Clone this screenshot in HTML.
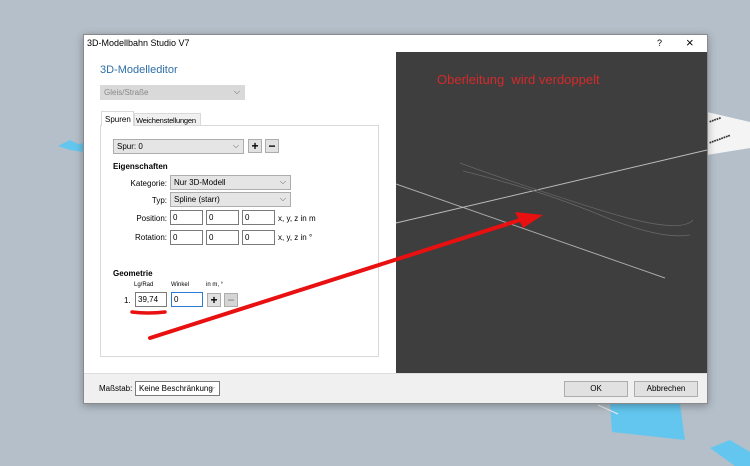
<!DOCTYPE html>
<html><head><style>
*{margin:0;padding:0;box-sizing:border-box}
body{width:750px;height:466px;background:#b5bfc9;position:relative;overflow:hidden;font-family:"Liberation Sans",sans-serif;font-size:8px;color:#000}
.a{position:absolute}
.inp{position:absolute;background:#fff;border:1px solid #7a7a7a;height:15px;font-size:8px;padding:2px 2px;line-height:10px}
.sel{position:absolute;background:#e5e5e5;border:1px solid #adadad;height:15px;font-size:8px;padding:2px 3px;line-height:10px}
.sel:after{content:"⌵";position:absolute;right:4px;top:1px;color:#555;font-size:8px}
.btn{position:absolute;background:#e1e1e1;border:1px solid #adadad;width:14px;height:14px;text-align:center;font-weight:bold;font-size:12px;line-height:12px}
.lbl{position:absolute;font-size:8px;text-align:right}
</style></head><body>
<svg class="a" style="left:0;top:0" width="750" height="466">
<path d="M58 146 L70 140 L78 144 L84 143 L84 152 L70 150 Z" fill="#63c6ee"/>
<polygon points="610,403 680,404 685,440 612,432" fill="#63c6ee"/>
<polygon points="710,448 730,440 750,452 750,466 735,466" fill="#63c6ee"/>
<polygon points="707,112 750,122 750,148 707,155" fill="#f4f4f4"/>
<line x1="598" y1="405" x2="618" y2="414" stroke="#eee" stroke-width="1"/>
<text x="710" y="124" font-size="7" fill="#333" transform="rotate(-20 710 124)">▪▪▪▪▪</text>
<text x="710" y="145" font-size="7" fill="#333" transform="rotate(-20 710 145)">▪▪▪▪▪▪▪▪▪</text>
</svg>
<div class="a" style="left:83px;top:34px;width:625px;height:370px;background:#fff;border:1px solid #8a8a8a;box-shadow:0 2px 8px rgba(0,0,0,.3)"></div>
<div class="a" style="left:87px;top:38px;font-size:9px">3D-Modellbahn Studio V7</div>
<div class="a" style="left:657px;top:38px;font-size:9px">?</div>
<div class="a" style="left:686px;top:35px;font-size:13px">×</div>
<div class="a" style="left:100px;top:64px;font-size:11px;color:#2e6ea6">3D-Modelleditor</div>
<div class="sel" style="left:100px;top:85px;width:145px;background:#d9d9d9;border-color:#d9d9d9;color:#888">Gleis/Straße</div>
<div class="a" style="left:100px;top:125px;width:279px;height:232px;border:1px solid #d9d9d9"></div>
<div class="a" style="left:101px;top:111px;width:33px;height:15px;border:1px solid #d9d9d9;border-bottom:none;background:#fff;padding:3px 3px;font-size:8px;line-height:9px">Spuren</div>
<div class="a" style="left:134px;top:113px;width:67px;height:13px;border:1px solid #d9d9d9;background:#f0f0f0;padding:2px 1px;font-size:7.5px;letter-spacing:-0.2px;line-height:9px;white-space:nowrap;overflow:hidden">Weichenstellungen</div>
<div class="sel" style="left:113px;top:139px;width:131px">Spur: 0</div>
<div class="btn" style="left:248px;top:139px">+</div>
<div class="btn" style="left:265px;top:139px">−</div>
<div class="a" style="left:113px;top:162px;font-weight:bold;font-size:8px">Eigenschaften</div>
<div class="lbl" style="left:110px;top:179px;width:57px">Kategorie:</div>
<div class="sel" style="left:170px;top:175px;width:121px">Nur 3D-Modell</div>
<div class="lbl" style="left:110px;top:196px;width:57px">Typ:</div>
<div class="sel" style="left:170px;top:192px;width:121px">Spline (starr)</div>
<div class="lbl" style="left:110px;top:214px;width:57px">Position:</div>
<div class="inp" style="left:170px;top:210px;width:33px">0</div>
<div class="inp" style="left:206px;top:210px;width:33px">0</div>
<div class="inp" style="left:242px;top:210px;width:33px">0</div>
<div class="a" style="left:278px;top:214px">x, y, z in m</div>
<div class="lbl" style="left:110px;top:233px;width:57px">Rotation:</div>
<div class="inp" style="left:170px;top:230px;width:33px">0</div>
<div class="inp" style="left:206px;top:230px;width:33px">0</div>
<div class="inp" style="left:242px;top:230px;width:33px">0</div>
<div class="a" style="left:278px;top:233px">x, y, z in °</div>
<div class="a" style="left:113px;top:269px;font-weight:bold;font-size:8px">Geometrie</div>
<div class="a" style="left:134px;top:282px;font-size:6px">Lg/Rad</div>
<div class="a" style="left:171px;top:282px;font-size:6px">Winkel</div>
<div class="a" style="left:206px;top:282px;font-size:6px">in m, °</div>
<div class="a" style="left:124px;top:296px">1.</div>
<div class="inp" style="left:135px;top:292px;width:32px">39,74</div>
<div class="inp" style="left:171px;top:292px;width:32px;border-color:#2b7bd6">0</div>
<div class="btn" style="left:207px;top:293px">+</div>
<div class="btn" style="left:224px;top:293px;color:#999;background:#d5d5d5">−</div>
<div class="a" style="left:396px;top:52px;width:311px;height:321px;background:#3e3e3e"></div>
<div class="a" style="left:437px;top:72px;font-size:13px;color:#d42a2a;letter-spacing:0px">Oberleitung&nbsp; wird verdoppelt</div>
<svg class="a" style="left:0;top:0" width="750" height="466">
<line x1="396" y1="184" x2="665" y2="278" stroke="#aaa" stroke-width="1"/>
<line x1="396" y1="223" x2="707" y2="150" stroke="#bbb" stroke-width="1"/>
<path d="M460 163 Q520 185 600 210 T693 220" stroke="#666" fill="none" stroke-width="0.8"/>
<path d="M463 171 Q540 190 600 215 T690 235" stroke="#666" fill="none" stroke-width="0.8"/>
<line x1="150" y1="338" x2="520" y2="220" stroke="#e81010" stroke-width="4" stroke-linecap="round"/>
<polygon points="543,215 515,212 523,228" fill="#e81010"/>
<path d="M132 312 Q148 314 165 312" stroke="#e81010" stroke-width="3.5" fill="none" stroke-linecap="round"/>
</svg>
<div class="a" style="left:84px;top:373px;width:623px;height:30px;background:#f0f0f0;border-top:1px solid #ddd"></div>
<div class="a" style="left:99px;top:384px">Maßstab:</div>
<div class="sel" style="left:135px;top:381px;width:85px;background:#fff;border-color:#7a7a7a;white-space:nowrap;overflow:hidden">Keine Beschränkung</div>
<div class="a" style="left:564px;top:381px;width:64px;height:16px;background:#e1e1e1;border:1px solid #adadad;text-align:center;line-height:14px">OK</div>
<div class="a" style="left:634px;top:381px;width:64px;height:16px;background:#e1e1e1;border:1px solid #adadad;text-align:center;line-height:14px">Abbrechen</div>
</body></html>
